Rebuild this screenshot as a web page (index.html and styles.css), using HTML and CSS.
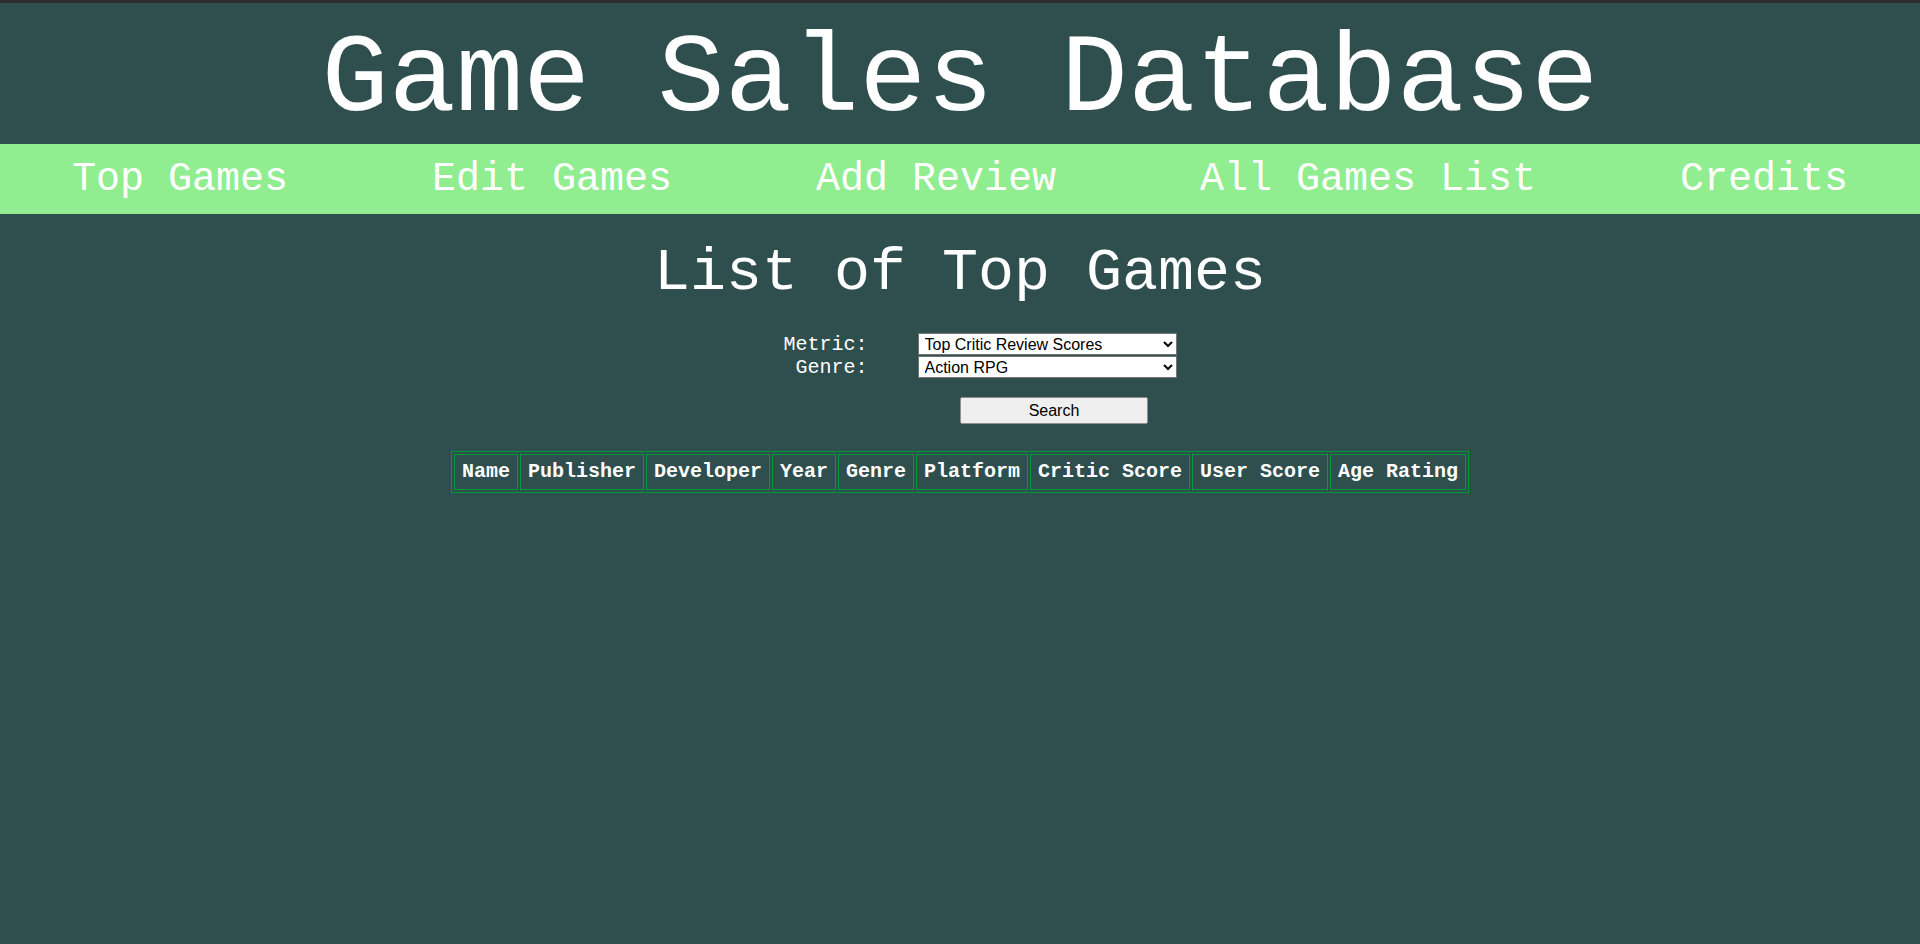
FILE: index.html
```html
<!DOCTYPE html>
<html lang="en">
<head>
<meta charset="utf-8">
<title>Game Sales Database</title>
<link rel="stylesheet" href="styles.css">
</head>
<body>
<header class="site-header">
  <h1 class="site-title">Game Sales Database</h1>
</header>
<nav class="main-nav">
  <a class="nav-link" href="#">Top Games</a>
  <a class="nav-link" href="#">Edit Games</a>
  <a class="nav-link" href="#">Add Review</a>
  <a class="nav-link" href="#">All Games List</a>
  <a class="nav-link" href="#">Credits</a>
</nav>
<main class="content">
  <h2 class="page-title">List of Top Games</h2>
  <form class="search-form">
    <div class="filters">
      <label class="filter-label" for="metric">Metric:</label>
      <select class="filter-select" id="metric">
        <option>Top Critic Review Scores</option>
        <option>Top User Review Scores</option>
        <option>Top Sales</option>
      </select>
      <label class="filter-label" for="genre">Genre:</label>
      <select class="filter-select" id="genre">
        <option>Action RPG</option>
        <option>Action</option>
        <option>Shooter</option>
      </select>
    </div>
    <div class="actions">
      <button type="button" class="search-btn">Search</button>
    </div>
  </form>
  <table class="results">
    <thead>
      <tr>
        <th>Name</th>
        <th>Publisher</th>
        <th>Developer</th>
        <th>Year</th>
        <th>Genre</th>
        <th>Platform</th>
        <th>Critic Score</th>
        <th>User Score</th>
        <th>Age Rating</th>
      </tr>
    </thead>
    <tbody></tbody>
  </table>
</main>
</body>
</html>
```
FILE: styles.css
```css
html {
  background: #2f4f4f;
}
body {
  margin: 0;
  min-height: 944px;
  background: #2f4f4f;
  color: #ffffff;
  font-family: "Liberation Mono", "Courier New", monospace;
  border-top: 3px solid #2c2c2c;
}
.site-header {
  padding-top: 14px;
}
.site-title {
  margin: 0;
  font-size: 112px;
  font-weight: normal;
  line-height: 127px;
  text-align: center;
  color: #ffffff;
}
.main-nav {
  display: flex;
  justify-content: space-around;
  align-items: center;
  height: 70px;
  background: #90ee90;
}
.nav-link {
  font-size: 40px;
  color: #ffffff;
  text-decoration: none;
}
.content {
  display: flex;
  flex-direction: column;
}
.page-title {
  margin: 25px 0 0;
  font-size: 60px;
  font-weight: normal;
  line-height: 68px;
  text-align: center;
}
.search-form {
  margin-top: 26px;
}
.filters {
  display: grid;
  grid-template-columns: 1fr auto auto 1fr;
  grid-auto-rows: 23px;
  padding-left: 40px;
}
.filter-label {
  grid-column: 2;
  font-size: 20px;
  line-height: 23px;
  text-align: right;
  color: #ffffff;
}
.filter-select {
  grid-column: 3;
  margin-left: 50px;
  width: 259px;
  height: 22px;
  font-family: "Liberation Sans", Arial, sans-serif;
  font-size: 16px;
  color: #000000;
  background: #ffffff;
  border: 1px solid #767676;
  border-radius: 0;
  padding: 0 2px;
}
.actions {
  margin-top: 18px;
  padding-left: 50%;
}
.search-btn {
  display: block;
  width: 188px;
  height: 27px;
  font-family: "Liberation Sans", Arial, sans-serif;
  font-size: 16px;
  color: #000000;
  background: #efefef;
  border: 1px solid #8f8f8f;
  border-radius: 2px;
}
.results {
  margin: 27px auto 0;
  border-collapse: separate;
  border-spacing: 2px;
  border: 1px solid #009a3a;
}
.results th {
  border: 1px solid #009a3a;
  padding: 6px 7px;
  font-size: 20px;
  line-height: 22px;
  font-weight: bold;
  color: #ffffff;
  white-space: nowrap;
}
```
